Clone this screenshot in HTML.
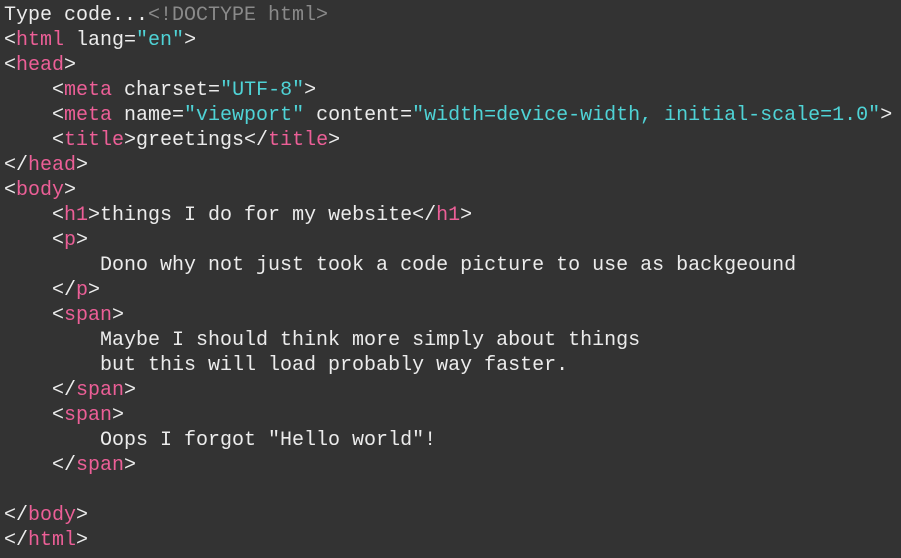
<!DOCTYPE html>
<html><head><style>
html,body{margin:0;padding:0;background:#333333;width:901px;height:558px;overflow:hidden}
pre{margin:0;padding:3px 0 0 4px;font-family:"Liberation Mono",monospace;font-size:20px;line-height:25px;color:#ececec;}
.t{color:#ec5f97}.s{color:#4fd3d6}.g{color:#8a8a8a}
</style></head><body><pre>Type code...<span class="g">&lt;!DOCTYPE html&gt;</span>
&lt;<span class="t">html</span> lang=<span class="s">"en"</span>&gt;
&lt;<span class="t">head</span>&gt;
    &lt;<span class="t">meta</span> charset=<span class="s">"UTF-8"</span>&gt;
    &lt;<span class="t">meta</span> name=<span class="s">"viewport"</span> content=<span class="s">"width=device-width, initial-scale=1.0"</span>&gt;
    &lt;<span class="t">title</span>&gt;greetings&lt;/<span class="t">title</span>&gt;
&lt;/<span class="t">head</span>&gt;
&lt;<span class="t">body</span>&gt;
    &lt;<span class="t">h1</span>&gt;things I do for my website&lt;/<span class="t">h1</span>&gt;
    &lt;<span class="t">p</span>&gt;
        Dono why not just took a code picture to use as backgeound
    &lt;/<span class="t">p</span>&gt;
    &lt;<span class="t">span</span>&gt;
        Maybe I should think more simply about things
        but this will load probably way faster.
    &lt;/<span class="t">span</span>&gt;
    &lt;<span class="t">span</span>&gt;
        Oops I forgot "Hello world"!
    &lt;/<span class="t">span</span>&gt;

&lt;/<span class="t">body</span>&gt;
&lt;/<span class="t">html</span>&gt;</pre></body></html>
